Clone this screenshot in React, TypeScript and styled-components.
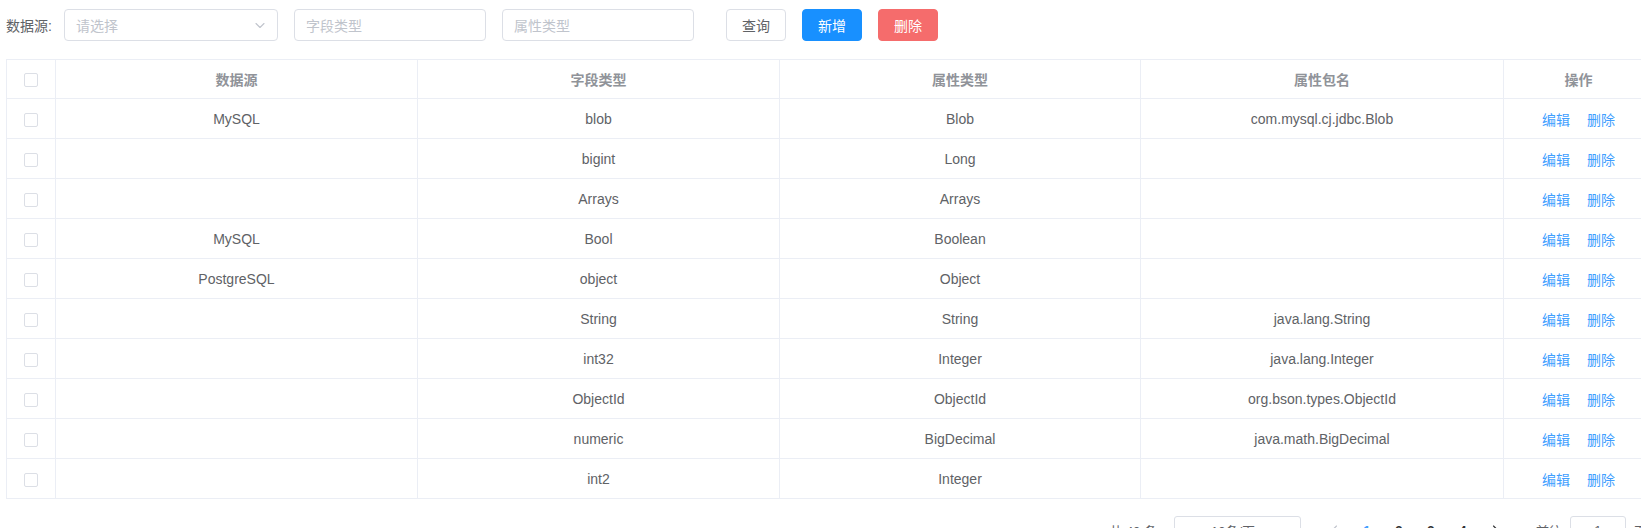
import React from "react";
import styled, { createGlobalStyle } from "styled-components";

const GlobalStyle = createGlobalStyle`
  html, body {
    margin: 0;
    padding: 0;
    overflow: hidden;
    background: #ffffff;
  }
  body {
    font-family: "Liberation Sans", "Noto Sans CJK SC", Arial, sans-serif;
    font-size: 14px;
    color: #606266;
  }
  * { box-sizing: border-box; }
`;

const Page = styled.div`
  padding: 9px 0 0 6px;
  width: 1653px;
`;

const Toolbar = styled.div`
  display: flex;
  align-items: center;
  height: 32px;
  margin-bottom: 18px;
`;

const Label = styled.span`
  font-size: 14px;
  color: #606266;
  margin-right: 12px;
  white-space: nowrap;
`;

const Field = styled.div<{ $w: number; $gap?: number }>`
  width: ${(p) => p.$w}px;
  height: 32px;
  margin-right: ${(p) => p.$gap ?? 16}px;
  border: 1px solid #dcdfe6;
  border-radius: 4px;
  display: flex;
  align-items: center;
  justify-content: space-between;
  padding: 0 11px;
  font-size: 14px;
  color: #c0c4cc;
  background: #fff;
`;

const Button = styled.button<{ $kind: "plain" | "primary" | "danger" }>`
  height: 32px;
  width: 60px;
  margin-right: 16px;
  border-radius: 4px;
  font-family: inherit;
  font-size: 14px;
  padding: 0;
  cursor: pointer;
  border: 1px solid
    ${(p) =>
      p.$kind === "primary" ? "#1890ff" : p.$kind === "danger" ? "#f56c6c" : "#dcdfe6"};
  background: ${(p) =>
    p.$kind === "primary" ? "#1890ff" : p.$kind === "danger" ? "#f56c6c" : "#ffffff"};
  color: ${(p) => (p.$kind === "plain" ? "#606266" : "#ffffff")};
`;

const Table = styled.table`
  width: 1647px;
  table-layout: fixed;
  border-collapse: separate;
  border-spacing: 0;
  border-top: 1px solid #ebeef5;
  border-left: 1px solid #ebeef5;
`;

const Th = styled.th`
  height: 39px;
  padding: 0;
  border-right: 1px solid #ebeef5;
  border-bottom: 1px solid #ebeef5;
  font-weight: bold;
  font-size: 14px;
  color: #909399;
  text-align: center;
  vertical-align: middle;
`;

const Td = styled.td`
  height: 40px;
  padding: 0;
  border-right: 1px solid #ebeef5;
  border-bottom: 1px solid #ebeef5;
  font-size: 14px;
  color: #606266;
  text-align: center;
  vertical-align: middle;
  white-space: nowrap;
`;

const Check = styled.span`
  display: inline-block;
  width: 14px;
  height: 14px;
  border: 1px solid #dcdfe6;
  border-radius: 2px;
  background: #fff;
  vertical-align: middle;
`;

const Actions = styled.div`
  display: flex;
  justify-content: center;
  gap: 17px;
`;

const LinkText = styled.span`
  color: #409eff;
  font-size: 14px;
  cursor: pointer;
`;

const Pager = styled.div`
  display: flex;
  justify-content: flex-end;
  align-items: center;
  margin-top: 17px;
  padding-right: 6px;
  height: 28px;
  font-size: 13px;
  color: #606266;
`;

const Total = styled.span`
  margin-right: 17px;
  white-space: nowrap;
`;

const SizeSelect = styled.div`
  width: 127px;
  height: 28px;
  border: 1px solid #dcdfe6;
  border-radius: 3px;
  display: flex;
  align-items: center;
  justify-content: space-between;
  padding: 0 10px 0 36px;
  margin-right: 18px;
  font-size: 13px;
  color: #606266;
`;

const PageItem = styled.span<{ $active?: boolean; $muted?: boolean }>`
  width: 32px;
  height: 28px;
  display: flex;
  align-items: center;
  justify-content: center;
  font-size: 13px;
  font-weight: bold;
  color: ${(p) => (p.$active ? "#409eff" : p.$muted ? "#c0c4cc" : "#303133")};
`;

const Jump = styled.span`
  margin-left: 25px;
  display: flex;
  align-items: center;
  gap: 8px;
  white-space: nowrap;
`;

const JumpInput = styled.div`
  width: 56px;
  height: 28px;
  border: 1px solid #dcdfe6;
  border-radius: 3px;
  display: flex;
  align-items: center;
  justify-content: center;
  color: #606266;
`;

const Chevron = ({ dir = "down", size = 12 }: { dir?: "down" | "left" | "right"; size?: number }) => {
  const d =
    dir === "down" ? "M2 4.5 L6 8.5 L10 4.5" : dir === "left" ? "M7.5 2 L3.5 6 L7.5 10" : "M4.5 2 L8.5 6 L4.5 10";
  return (
    <svg width={size} height={size} viewBox="0 0 12 12" fill="none">
      <path d={d} stroke="currentColor" strokeWidth="1.1" strokeLinecap="round" strokeLinejoin="round" />
    </svg>
  );
};

const rows = [
  ["MySQL", "blob", "Blob", "com.mysql.cj.jdbc.Blob"],
  ["", "bigint", "Long", ""],
  ["", "Arrays", "Arrays", ""],
  ["MySQL", "Bool", "Boolean", ""],
  ["PostgreSQL", "object", "Object", ""],
  ["", "String", "String", "java.lang.String"],
  ["", "int32", "Integer", "java.lang.Integer"],
  ["", "ObjectId", "ObjectId", "org.bson.types.ObjectId"],
  ["", "numeric", "BigDecimal", "java.math.BigDecimal"],
  ["", "int2", "Integer", ""],
];

export default function App() {
  return (
    <>
      <GlobalStyle />
      <Page>
        <Toolbar>
          <Label>数据源:</Label>
          <Field $w={214}>
            <span>请选择</span>
            <Chevron />
          </Field>
          <Field $w={192}>字段类型</Field>
          <Field $w={192} $gap={32}>属性类型</Field>
          <Button $kind="plain">查询</Button>
          <Button $kind="primary">新增</Button>
          <Button $kind="danger">删除</Button>
        </Toolbar>

        <Table>
          <colgroup>
            <col style={{ width: 49 }} />
            <col style={{ width: 362 }} />
            <col style={{ width: 362 }} />
            <col style={{ width: 361 }} />
            <col style={{ width: 363 }} />
            <col style={{ width: 150 }} />
          </colgroup>
          <thead>
            <tr>
              <Th>
                <Check />
              </Th>
              <Th>数据源</Th>
              <Th>字段类型</Th>
              <Th>属性类型</Th>
              <Th>属性包名</Th>
              <Th>操作</Th>
            </tr>
          </thead>
          <tbody>
            {rows.map((r, i) => (
              <tr key={i}>
                <Td>
                  <Check />
                </Td>
                {r.map((c, j) => (
                  <Td key={j}>{c}</Td>
                ))}
                <Td>
                  <Actions>
                    <LinkText>编辑</LinkText>
                    <LinkText>删除</LinkText>
                  </Actions>
                </Td>
              </tr>
            ))}
          </tbody>
        </Table>

        <Pager>
          <Total>共 40 条</Total>
          <SizeSelect>
            <span>10条/页</span>
            <Chevron />
          </SizeSelect>
          <PageItem $muted>
            <Chevron dir="left" />
          </PageItem>
          <PageItem $active>1</PageItem>
          <PageItem>2</PageItem>
          <PageItem>3</PageItem>
          <PageItem>4</PageItem>
          <PageItem>
            <Chevron dir="right" />
          </PageItem>
          <Jump>
            前往
            <JumpInput>1</JumpInput>
            页
          </Jump>
        </Pager>
      </Page>
    </>
  );
}
